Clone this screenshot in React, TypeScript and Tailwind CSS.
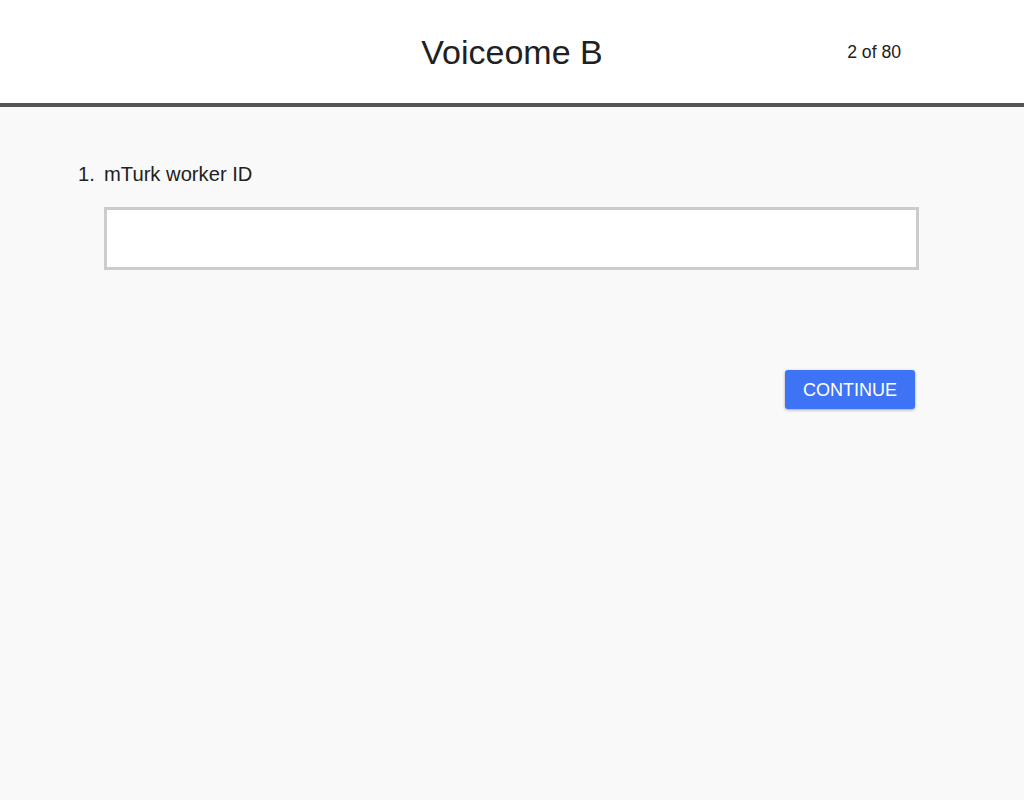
const App = () => {
  return (
    <div className="w-full min-h-[800px] bg-[#f9f9f9] font-['Liberation_Sans',Arial,sans-serif] text-[#222]">
      <header className="h-[103px] bg-white grid grid-cols-[1fr_auto_1fr] items-center">
        <div />
        <h1 className="text-[34px] leading-none text-[#212121]">Voiceome B</h1>
        <div className="flex justify-end pr-[123px] text-[17.6px] text-[#212121] pt-[1px]">2 of 80</div>
      </header>
      <div className="h-[4px] bg-[#555555]" />

      <main className="pl-[78px] pr-[105px] pt-[55px]">
        <div className="flex items-center text-[20.2px] leading-[24px] text-[#212121]">
          <span className="w-[26px]">1.</span>
          <span>mTurk worker ID</span>
        </div>
        <div className="pl-[26px] pt-[21px]">
          <input
            type="text"
            className="block w-full h-[63px] bg-white border-[3px] border-[#cccccc] outline-none px-3 text-[18px]"
          />
        </div>
        <div className="flex justify-end pt-[100px] pr-[4px]">
          <button className="h-[39px] w-[130px] rounded-[3px] bg-[#3e73f5] text-white text-[18px] leading-none shadow-[0_1px_3px_rgba(0,0,0,0.35)]">
            CONTINUE
          </button>
        </div>
      </main>
    </div>
  );
};

export default App;
